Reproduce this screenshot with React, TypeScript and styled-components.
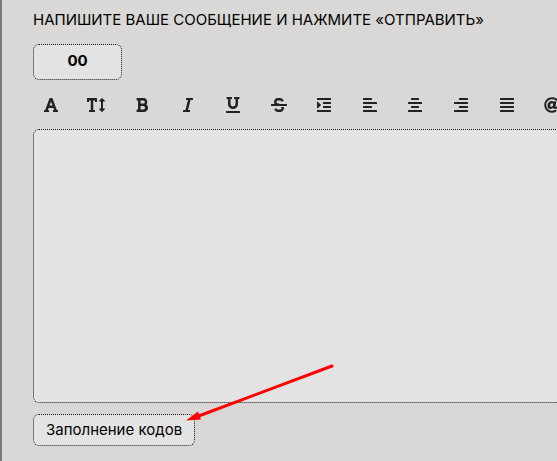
import React from "react";
import styled, { createGlobalStyle } from "styled-components";
import {
  FaFont,
  FaTextHeight,
  FaBold,
  FaItalic,
  FaUnderline,
  FaStrikethrough,
  FaIndent,
  FaAlignLeft,
  FaAlignCenter,
  FaAlignRight,
  FaAlignJustify,
  FaAt,
} from "react-icons/fa";

const GlobalStyle = createGlobalStyle`
  *, *::before, *::after { box-sizing: border-box; }
  body {
    margin: 0;
    background: #d9d8d6;
    color: #000;
    font: 15px/20px Inter, "Liberation Sans", sans-serif;
  }
`;

const Panel = styled.form`
  position: relative;
  min-height: 100vh;
  padding: 10px 0 15px 31px;
  overflow: hidden;
  border-left: 2px solid #7a7a7a;
`;

const Heading = styled.label`
  display: block;
  font-size: 15px;
  line-height: 20px;
  text-transform: uppercase;
`;

const BoxButton = styled.button<{ $strong?: boolean }>`
  display: block;
  min-width: 89px;
  margin: 0;
  padding: ${(p) => (p.$strong ? "6px 12px 8px" : "5px 12px")};
  border: 1px dotted #111;
  border-radius: 6px;
  background: #e3e3e3;
  color: #000;
  font: inherit;
  font-weight: ${(p) => (p.$strong ? 700 : 400)};
`;

const CounterRow = styled.div`
  margin-top: 14px;
`;

const Toolbar = styled.div`
  display: grid;
  grid-template-columns: repeat(12, 1fr);
  margin: 10px -18px 9px -5px;
`;

const Tool = styled.button<{ $size?: number }>`
  display: flex;
  align-items: center;
  justify-content: center;
  height: 30px;
  padding: 0;
  border: 0;
  background: none;
  color: #222;

  svg {
    width: auto;
    height: ${(p) => p.$size ?? 16}px;
  }
`;

const MessageWrap = styled.div`
  margin-right: -12px;
`;

const Message = styled.textarea`
  display: block;
  width: 100%;
  height: 274px;
  padding: 12px;
  border: 1px dotted #111;
  border-radius: 6px;
  background: #e3e3e3;
  font: inherit;
  resize: none;
  outline: none;
`;

const CodesRow = styled.div`
  margin-top: 11px;
`;

const Arrow = styled.svg`
  position: absolute;
  left: 183px;
  top: 362px;
  pointer-events: none;
`;

const tools = [
  { label: "Шрифт", Icon: FaFont },
  { label: "Размер", Icon: FaTextHeight, size: 18 },
  { label: "Жирный", Icon: FaBold },
  { label: "Курсив", Icon: FaItalic },
  { label: "Подчёркнутый", Icon: FaUnderline },
  { label: "Зачёркнутый", Icon: FaStrikethrough },
  { label: "Отступ", Icon: FaIndent },
  { label: "По левому краю", Icon: FaAlignLeft },
  { label: "По центру", Icon: FaAlignCenter },
  { label: "По правому краю", Icon: FaAlignRight },
  { label: "По ширине", Icon: FaAlignJustify },
  { label: "Упоминание", Icon: FaAt },
];

export default function App() {
  return (
    <>
      <GlobalStyle />
      <Panel onSubmit={(e) => e.preventDefault()}>
        <Heading htmlFor="message">
          Напишите ваше сообщение и нажмите «Отправить»
        </Heading>
        <CounterRow>
          <BoxButton type="button" $strong>
            00
          </BoxButton>
        </CounterRow>
        <Toolbar role="toolbar">
          {tools.map(({ label, Icon, size }) => (
            <Tool key={label} type="button" aria-label={label} $size={size}>
              <Icon />
            </Tool>
          ))}
        </Toolbar>
        <MessageWrap>
          <Message id="message" />
        </MessageWrap>
        <CodesRow>
          <BoxButton type="button">Заполнение кодов</BoxButton>
        </CodesRow>
        <Arrow width="154" height="62" viewBox="0 0 154 62" aria-hidden="true">
          <path d="M15 53.5 147 4" stroke="#f00" strokeWidth="3" strokeLinecap="round" />
          <path d="M1 58.5 13 49.5 16 57.5Z" fill="#f00" />
        </Arrow>
      </Panel>
    </>
  );
}
